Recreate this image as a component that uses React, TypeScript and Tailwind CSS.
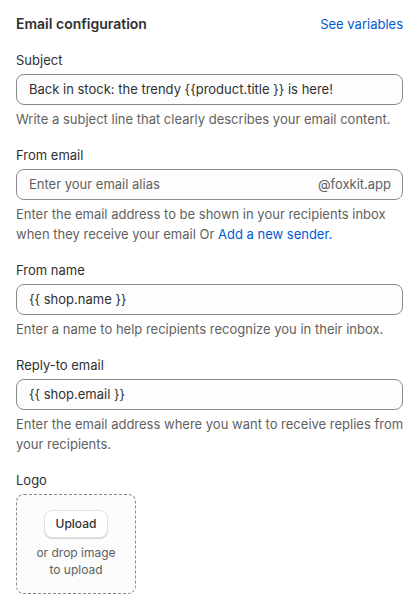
import React from "react";

type FieldProps = {
  label: string;
  value?: string;
  placeholder?: string;
  suffix?: string;
  help: React.ReactNode;
};

function Field({ label, value, placeholder, suffix, help }: FieldProps) {
  return (
    <div className="flex flex-col">
      <label className="text-[13px] leading-5 text-[#303030]">{label}</label>
      <div className="mt-1 flex h-[31px] items-center rounded-lg border border-[#8a8a8a] bg-[#fdfdfd] pl-3 pr-[11px]">
        {value ? (
          <span className="flex-1 truncate text-[13px] text-[#303030]">{value}</span>
        ) : (
          <span className="flex-1 truncate text-[13px] text-[#616161]">{placeholder}</span>
        )}
        {suffix && <span className="text-[13px] text-[#616161]">{suffix}</span>}
      </div>
      <p className="-mr-1 mt-1 text-[13px] leading-5 text-[#616161]">{help}</p>
    </div>
  );
}

export default function App() {
  return (
    <div
      className="min-h-screen bg-white px-4 pt-[14px] pb-4"
      style={{ fontFamily: "Inter, 'Liberation Sans', sans-serif" }}
    >
      <div className="flex items-center justify-between">
        <h2 className="text-[14px] leading-5 font-semibold text-[#303030]">
          Email configuration
        </h2>
        <a className="text-[13px] leading-5 text-[#005bd3]">See variables</a>
      </div>

      <div className="mt-4 flex flex-col gap-4">
        <Field
          label="Subject"
          value="Back in stock: the trendy {{product.title }} is here!"
          help="Write a subject line that clearly describes your email content."
        />
        <Field
          label="From email"
          placeholder="Enter your email alias"
          suffix="@foxkit.app"
          help={
            <>
              Enter the email address to be shown in your recipients inbox when they receive
              your email Or <a className="text-[#005bd3]">Add a new sender.</a>
            </>
          }
        />
        <Field
          label="From name"
          value="{{ shop.name }}"
          help="Enter a name to help recipients recognize you in their inbox."
        />
        <Field
          label="Reply-to email"
          value="{{ shop.email }}"
          help="Enter the email address where you want to receive replies from your recipients."
        />

        <div className="flex flex-col">
          <label className="text-[13px] leading-5 text-[#303030]">Logo</label>
          <div className="mt-1 flex h-[100px] w-[120px] flex-col items-center rounded-lg border border-dashed border-[#8a8a8a] bg-[#fcfcfc] pt-[15px]">
            <button className="h-[28px] w-[64px] rounded-lg border border-[#e3e3e3] bg-white text-[12px] font-medium text-[#303030] shadow-[0_1px_0_0_#d4d4d4]">
              Upload
            </button>
            <p className="mt-[6px] text-center text-[12px] leading-[17px] text-[#616161]">
              or drop image
              <br />
              to upload
            </p>
          </div>
        </div>
      </div>
    </div>
  );
}
